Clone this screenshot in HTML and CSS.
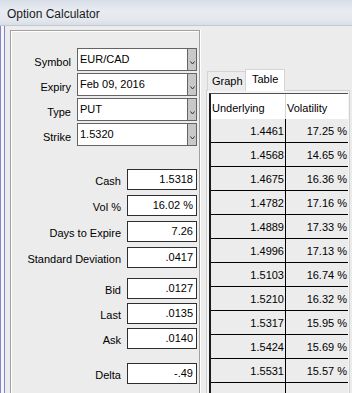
FILE: index.html
```html
<!DOCTYPE html>
<html lang="en">
<head>
    <meta charset="UTF-8">
    <title>Option Calculator</title>
    <link rel="stylesheet" href="styles.css">
</head>
<body>
    <div class="titlebar">Option Calculator</div>

    <div class="frame">
        <div class="client">
            <div class="inputs">
                <div class="combo-row">
                    <label>Symbol</label>
                    <div class="combo">
                        <span class="combo-value">EUR/CAD</span>
                        <span class="combo-btn"><svg width="5" height="4" viewBox="0 0 5 4"><polyline points="0.5,0.5 2.5,3 4.5,0.5" fill="none" stroke="#333" stroke-width="1"/></svg></span>
                    </div>
                </div>
                <div class="combo-row">
                    <label>Expiry</label>
                    <div class="combo">
                        <span class="combo-value">Feb 09, 2016</span>
                        <span class="combo-btn"><svg width="5" height="4" viewBox="0 0 5 4"><polyline points="0.5,0.5 2.5,3 4.5,0.5" fill="none" stroke="#333" stroke-width="1"/></svg></span>
                    </div>
                </div>
                <div class="combo-row">
                    <label>Type</label>
                    <div class="combo">
                        <span class="combo-value">PUT</span>
                        <span class="combo-btn"><svg width="5" height="4" viewBox="0 0 5 4"><polyline points="0.5,0.5 2.5,3 4.5,0.5" fill="none" stroke="#333" stroke-width="1"/></svg></span>
                    </div>
                </div>
                <div class="combo-row">
                    <label>Strike</label>
                    <div class="combo">
                        <span class="combo-value">1.5320</span>
                        <span class="combo-btn"><svg width="5" height="4" viewBox="0 0 5 4"><polyline points="0.5,0.5 2.5,3 4.5,0.5" fill="none" stroke="#333" stroke-width="1"/></svg></span>
                    </div>
                </div>

                <div class="field-row group-start">
                    <label>Cash</label>
                    <div class="field">1.5318</div>
                </div>
                <div class="field-row">
                    <label>Vol %</label>
                    <div class="field">16.02 %</div>
                </div>
                <div class="field-row">
                    <label>Days to Expire</label>
                    <div class="field">7.26</div>
                </div>
                <div class="field-row">
                    <label>Standard Deviation</label>
                    <div class="field">.0417</div>
                </div>

                <div class="field-row tight quote-start">
                    <label>Bid</label>
                    <div class="field">.0127</div>
                </div>
                <div class="field-row tight">
                    <label>Last</label>
                    <div class="field">.0135</div>
                </div>
                <div class="field-row tight">
                    <label>Ask</label>
                    <div class="field">.0140</div>
                </div>

                <div class="field-row greek-start">
                    <label>Delta</label>
                    <div class="field">-.49</div>
                </div>
            </div>

            <div class="results">
                <div class="tabs">
                    <div class="tab">Graph</div>
                    <div class="tab active">Table</div>
                </div>
                <div class="pane">
                    <table class="grid">
                        <thead>
                            <tr><th>Underlying</th><th>Volatility</th></tr>
                        </thead>
                        <tbody>
                            <tr><td>1.4461</td><td>17.25 %</td></tr>
                            <tr><td>1.4568</td><td>14.65 %</td></tr>
                            <tr><td>1.4675</td><td>16.36 %</td></tr>
                            <tr><td>1.4782</td><td>17.16 %</td></tr>
                            <tr><td>1.4889</td><td>17.33 %</td></tr>
                            <tr><td>1.4996</td><td>17.13 %</td></tr>
                            <tr><td>1.5103</td><td>16.74 %</td></tr>
                            <tr><td>1.5210</td><td>16.32 %</td></tr>
                            <tr><td>1.5317</td><td>15.95 %</td></tr>
                            <tr><td>1.5424</td><td>15.69 %</td></tr>
                            <tr><td>1.5531</td><td>15.57 %</td></tr>
                            <tr><td></td><td></td></tr>
                        </tbody>
                    </table>
                </div>
            </div>
        </div>
    </div>
</body>
</html>
```

FILE: styles.css
```css
* {
    box-sizing: border-box;
}

body {
    margin: 0;
    width: 352px;
    height: 393px;
    overflow: hidden;
    background: #ececec;
    color: #000;
    font-family: "Liberation Sans", Arial, sans-serif;
    font-size: 11px;
}

.titlebar {
    height: 26px;
    padding: 4px 0 0 7px;
    line-height: 21px;
    font-size: 12px;
    color: #1a1a1a;
    background: linear-gradient(#d8dde7 0%, #e9ecf2 45%, #e3e7ee 80%, #d9dde6 100%);
    border-bottom: 1px solid #c3c8d2;
}

.frame {
    height: 367px;
    padding-left: 3px;
    border-left: 1px solid #8585c6;
    background: #f6f6fa;
}

.client {
    display: flex;
    align-items: flex-start;
    height: 100%;
    padding: 4px 0 0 5px;
    border-left: 1px solid #8585c6;
    background: #ececec;
    overflow: hidden;
}

/* left form panel */
.inputs {
    flex: none;
    width: 190px;
    height: 363px;
    padding-top: 17px;
    border: 1px solid #a0a0a0;
    border-bottom: none;
    box-shadow: inset 1px 1px 0 #fff, 1px 0 0 #fff;
}

.combo-row,
.field-row {
    display: flex;
    align-items: flex-end;
}

.combo-row label,
.field-row label {
    padding-bottom: 2px;
    margin-right: 6px;
    line-height: 13px;
    text-align: right;
    white-space: nowrap;
}

.combo-row {
    height: 23px;
    margin-bottom: 2px;
}

.combo-row label {
    width: 60px;
}

.combo {
    display: flex;
    width: 120px;
    height: 23px;
    background: #fff;
    border: 1px solid #646464;
}

.combo-value {
    flex: 1;
    padding-left: 2px;
    line-height: 21px;
}

.combo-btn {
    display: flex;
    align-items: center;
    justify-content: center;
    width: 9px;
    padding-top: 6px;
    background: #c8c8c8;
    border-left: 1px solid #646464;
}

.field-row {
    height: 21px;
    margin-bottom: 5px;
}

.field-row label {
    width: 110px;
}

.field {
    width: 70px;
    height: 21px;
    padding-right: 3px;
    line-height: 19px;
    text-align: right;
    background: #fff;
    border: 1px solid #2e2e2e;
}

.group-start {
    margin-top: 23px;
}

.field-row.tight {
    margin-bottom: 4px;
}

.quote-start {
    margin-top: 10px;
}

.greek-start {
    margin-top: 14px;
}

/* right results panel */
.results {
    flex: none;
    width: 144px;
    margin: 39px 0 0 6px;
}

.tabs {
    position: relative;
    z-index: 1;
    display: flex;
    align-items: flex-end;
    height: 22px;
    margin-bottom: -1px;
    padding-left: 1px;
}

.tab {
    width: 39px;
    height: 20px;
    padding: 3px 0 0 4px;
    line-height: 13px;
    background: #ececec;
    border: 1px solid #d4d4d4;
    border-bottom: none;
}

.tab.active {
    width: 40px;
    height: 22px;
    margin-left: -1px;
    padding: 3px 0 0 6px;
    background: #fff;
}

.pane {
    height: 303px;
    padding: 2px 0 0 2px;
    background: #f4f4f4;
    border: 1px solid #d0d0d0;
    border-bottom: none;
    overflow: hidden;
}

.grid {
    width: 139px;
    table-layout: fixed;
    border-collapse: separate;
    border-spacing: 0;
    border-left: 2px solid #1c1c1c;
    border-top: 1px solid #505050;
}

.grid th {
    height: 25px;
    padding: 2px 0 0 1px;
    font-weight: normal;
    text-align: left;
    background: #fff;
}

.grid th:first-child {
    width: 75px;
    border-right: 1px solid #d6d6d6;
}

.grid td {
    height: 24px;
    padding: 0 1px 0 0;
    text-align: right;
    background: #ececec;
    border-bottom: 1px solid #000;
}

.grid td:first-child {
    border-right: 1px solid #000;
}
```
